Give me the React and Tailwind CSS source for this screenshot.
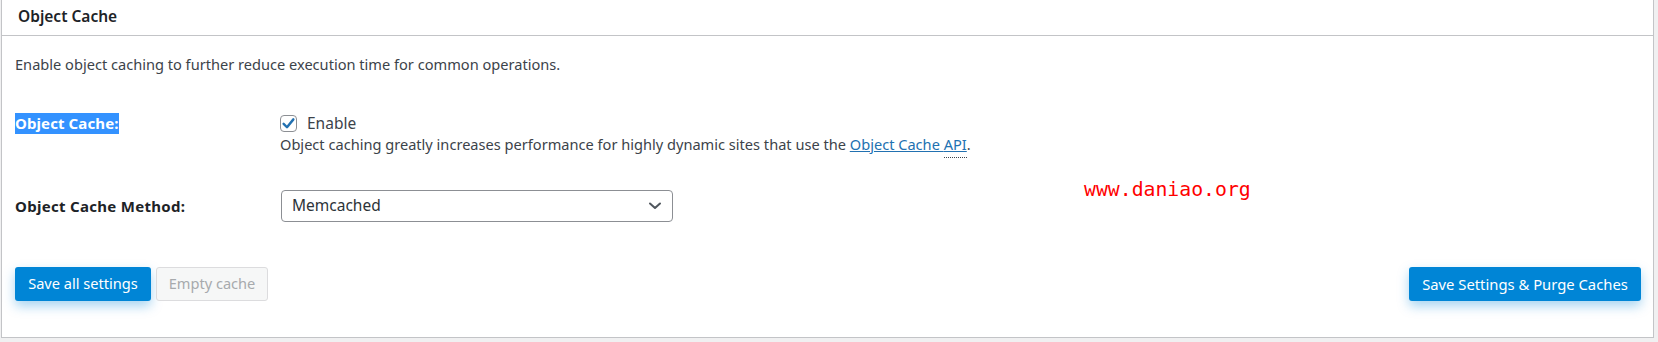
export default function App() {
  return (
    <div className="w-[1658px] h-[342px] bg-[#f0f0f1] pl-[1px] pr-[4px] pb-[4px]" style={{ fontFamily: '"Noto Sans", "Open Sans", sans-serif' }}>
      <div className="relative h-full bg-white border-x border-b border-[#c3c4c7] text-[#3c434a]">
        <div className="h-[36px] border-b border-[#c3c4c7] flex items-center pl-[16px] pb-[3px]">
          <h2 className="text-[15.5px] font-semibold text-[#1d2327] leading-[20px]">Object Cache</h2>
        </div>
        <div className="px-[13px]">
          <p className="mt-[18px] text-[14.6px] leading-[21px]">
            Enable object caching to further reduce execution time for common operations.
          </p>
          <div className="mt-[36px] flex">
            <div className="w-[265px] shrink-0">
              <span className="bg-[#3392ff] text-white font-bold text-[15px] tracking-[0.1px] leading-[21px] inline-block h-[21px]">Object Cache:</span>
            </div>
            <div className="text-[14.6px] leading-[20px]">
              <label className="flex items-center h-[20px]">
                <span className="w-[17px] h-[17px] mt-[4px] rounded-[4px] border border-[#8c8f94] bg-white flex items-center justify-center">
                  <svg width="15" height="15" viewBox="0 0 20 20">
                    <path d="M3.5 10.5 L8 15 L16.5 4.5" fill="none" stroke="#2271b1" strokeWidth="3.2" strokeLinecap="round" strokeLinejoin="round" />
                  </svg>
                </span>
                <span className="ml-[10px] text-[15.5px] mt-[3px]">Enable</span>
              </label>
              <p className="mt-[3px]">
                Object caching greatly increases performance for highly dynamic sites that use the{" "}
                <a className="text-[#2271b1] underline">
                  Object Cache <span className="border-b border-dotted border-[#3c434a] pb-[3px]">API</span>
                </a>
                .
              </p>
            </div>
          </div>
          <div className="mt-[36px] flex items-center">
            <div className="w-[266px] shrink-0 font-bold text-[15px] tracking-[0.3px] text-[#1d2327] leading-[20px]">Object Cache Method:</div>
            <div className="w-[392px] h-[32px] rounded-[4px] border border-[#8c8f94] bg-white flex items-center justify-between pl-[10px] pr-[10px] text-[15.5px] text-[#2c3338]">
              <span>Memcached</span>
              <svg width="14" height="10" viewBox="0 0 14 10">
                <path d="M2 2.5 L7 7 L12 2.5" fill="none" stroke="#50575e" strokeWidth="2" strokeLinecap="round" strokeLinejoin="round" />
              </svg>
            </div>
          </div>
          <div className="mt-[45px] flex items-center justify-between">
            <div className="flex gap-[5px]">
              <button className="w-[136px] h-[34px] rounded-[3px] bg-[#0085d6] text-white text-[14.6px] shadow-[0_5px_12px_rgba(0,133,214,0.35)]">
                Save all settings
              </button>
              <button className="w-[112px] h-[34px] rounded-[3px] bg-[#f6f7f7] border border-[#dcdcde] text-[#a7aaad] text-[14.6px]">
                Empty cache
              </button>
            </div>
            <button className="w-[232px] h-[34px] rounded-[3px] bg-[#0085d6] text-white text-[14.8px] shadow-[0_5px_12px_rgba(0,133,214,0.35)] mr-[-1px]">
              Save Settings &amp; Purge Caches
            </button>
          </div>
        </div>
        <div className="absolute left-[1082px] top-[178px] text-[19.8px] leading-[24px] text-[#ff0000]" style={{ fontFamily: '"DejaVu Sans Mono", monospace' }}>
          www.daniao.org
        </div>
      </div>
    </div>
  );
}
